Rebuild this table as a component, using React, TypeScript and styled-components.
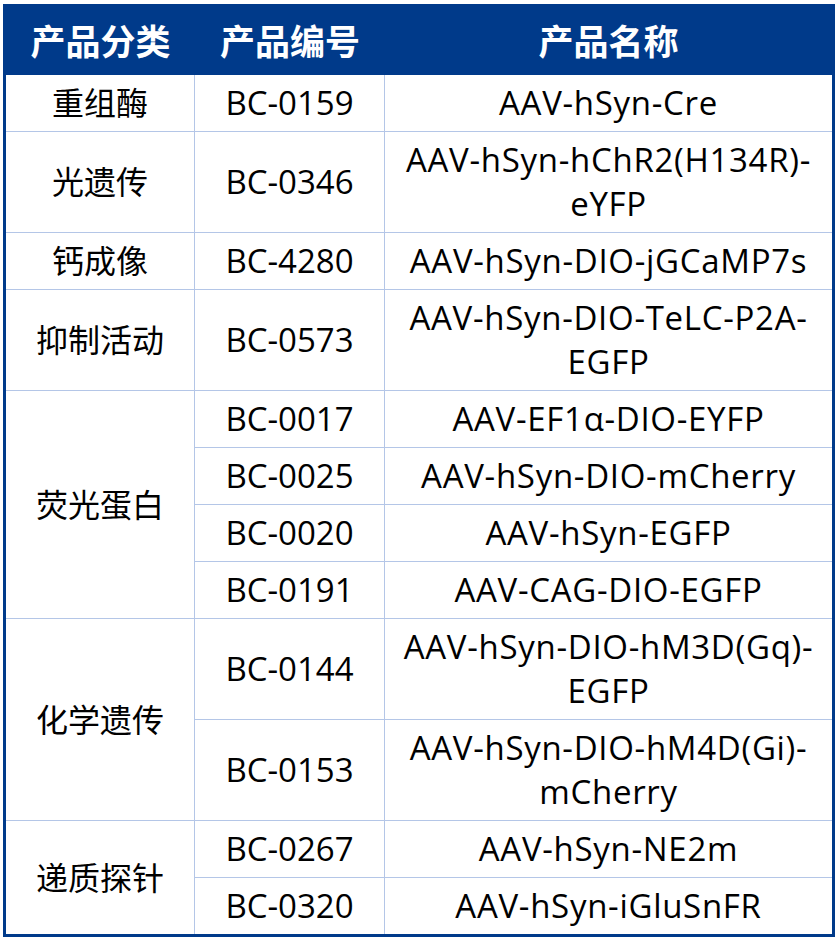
import React from "react";
import styled, { createGlobalStyle } from "styled-components";

const GlobalStyle = createGlobalStyle`
  html, body {
    margin: 0;
    padding: 0;
    background: #ffffff;
  }
  body {
    font-family: "Open Sans", "Noto Sans CJK SC", sans-serif;
  }
`;

const Page = styled.div`
  width: 837px;
  height: 939px;
  padding: 4px 0 0 3px;
  box-sizing: border-box;
  background: #ffffff;
`;

const Table = styled.table`
  width: 832px;
  table-layout: fixed;
  border-collapse: separate;
  border-spacing: 0;
  border: 3px solid #003a8a;
  border-top: none;
  box-sizing: border-box;
`;

const HeadCell = styled.th<{ $w: number }>`
  width: ${(p) => p.$w}px;
  box-sizing: border-box;
  height: 71px;
  padding: 0;
  background: #003a8a;
  color: #ffffff;
  font-family: "Noto Sans CJK SC", sans-serif;
  font-size: 35px;
  font-weight: 700;
  text-align: center;
  vertical-align: middle;
  line-height: 40px;
`;

const Cell = styled.td<{ $last?: boolean; $edge?: boolean; $kind: "cat" | "code" | "name" }>`
  box-sizing: border-box;
  padding: 6px 0;
  font-size: ${(p) => (p.$kind === "cat" ? 32 : 33)}px;
  letter-spacing: ${(p) => (p.$kind === "name" ? "0.7px" : "0")};
  line-height: 44px;
  color: #000000;
  text-align: center;
  vertical-align: middle;
  white-space: nowrap;
  border-bottom: ${(p) => (p.$last ? "none" : "1px solid #b4c6e7")};
  border-right: ${(p) => (p.$edge ? "none" : "1px solid #b4c6e7")};
`;

const Line = styled.div`
  display: block;
`;

type Item = { code: string; name: string[] };
type Group = { cat: string; items: Item[] };

const groups: Group[] = [
  { cat: "重组酶", items: [{ code: "BC-0159", name: ["AAV-hSyn-Cre"] }] },
  { cat: "光遗传", items: [{ code: "BC-0346", name: ["AAV-hSyn-hChR2(H134R)-", "eYFP"] }] },
  { cat: "钙成像", items: [{ code: "BC-4280", name: ["AAV-hSyn-DIO-jGCaMP7s"] }] },
  { cat: "抑制活动", items: [{ code: "BC-0573", name: ["AAV-hSyn-DIO-TeLC-P2A-", "EGFP"] }] },
  {
    cat: "荧光蛋白",
    items: [
      { code: "BC-0017", name: ["AAV-EF1α-DIO-EYFP"] },
      { code: "BC-0025", name: ["AAV-hSyn-DIO-mCherry"] },
      { code: "BC-0020", name: ["AAV-hSyn-EGFP"] },
      { code: "BC-0191", name: ["AAV-CAG-DIO-EGFP"] },
    ],
  },
  {
    cat: "化学遗传",
    items: [
      { code: "BC-0144", name: ["AAV-hSyn-DIO-hM3D(Gq)-", "EGFP"] },
      { code: "BC-0153", name: ["AAV-hSyn-DIO-hM4D(Gi)-", "mCherry"] },
    ],
  },
  {
    cat: "递质探针",
    items: [
      { code: "BC-0267", name: ["AAV-hSyn-NE2m"] },
      { code: "BC-0320", name: ["AAV-hSyn-iGluSnFR"] },
    ],
  },
];

export default function App() {
  const rows: React.ReactNode[] = [];
  groups.forEach((g, gi) => {
    const lastGroup = gi === groups.length - 1;
    g.items.forEach((it, ii) => {
      const lastRow = lastGroup && ii === g.items.length - 1;
      rows.push(
        <tr key={it.code}>
          {ii === 0 && (
            <Cell rowSpan={g.items.length} $last={lastGroup} $kind="cat">
              {g.cat}
            </Cell>
          )}
          <Cell $last={lastRow} $kind="code">
            {it.code}
          </Cell>
          <Cell $last={lastRow} $edge $kind="name">
            {it.name.map((l) => (
              <Line key={l}>{l}</Line>
            ))}
          </Cell>
        </tr>
      );
    });
  });

  return (
    <Page>
      <GlobalStyle />
      <Table>
        <thead>
          <tr>
            <HeadCell $w={189}>产品分类</HeadCell>
            <HeadCell $w={190}>产品编号</HeadCell>
            <HeadCell $w={447}>产品名称</HeadCell>
          </tr>
        </thead>
        <tbody>{rows}</tbody>
      </Table>
    </Page>
  );
}
